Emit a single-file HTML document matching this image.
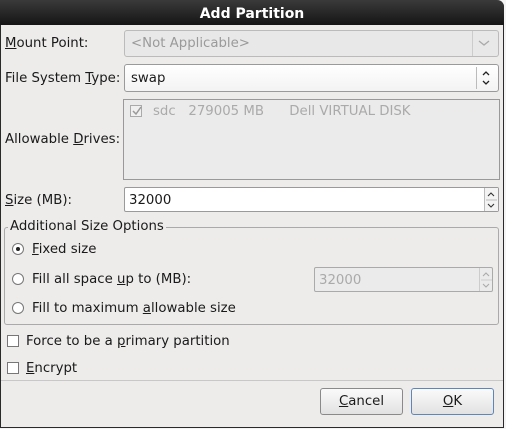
<!DOCTYPE html>
<html><head><style>
*{box-sizing:border-box;margin:0;padding:0}
body{width:506px;height:429px;background:#f4f4f4;font-family:"DejaVu Sans","Liberation Sans",sans-serif;font-size:13.3px;color:#1a1a1a;position:relative;overflow:hidden}
.dlg{position:absolute;left:0;top:0;width:504px;height:428px;background:#edeceb;border:1px solid #2a2a2a;border-top:none;border-radius:0 7px 0 0}
.title{position:absolute;left:0;top:0;width:504px;height:25px;background:linear-gradient(#3a3a3a,#151515);border-radius:0 7px 0 0;color:#fff;font-weight:bold;font-size:14px;text-align:center;line-height:28px}
.a{position:absolute;white-space:nowrap}
.t{margin-top:1px}
.box{position:absolute;border:1px solid #9a9a9a;border-radius:3px}
u{text-decoration:underline}
.rad{position:absolute;width:12px;height:12px;border:1px solid #777;border-radius:50%;background:#fff}
.chk{position:absolute;width:12px;height:12px;border:1px solid #777;background:#fff}
.btn{position:absolute;border:1px solid #8a8a8a;border-radius:3px;background:linear-gradient(#fafafa,#e2e2e2);text-align:center;line-height:26px}
</style></head><body>
<div class="dlg"></div>
<div class="title">Add Partition</div>

<div class="a" style="left:5px;top:36px"><u>M</u>ount Point:</div>
<div class="box" style="left:124px;top:30px;width:375px;height:27px;background:#e8e8e8;border-color:#bbb"></div>
<div class="a" style="left:131px;top:36px;color:#9a9a9a">&lt;Not Applicable&gt;</div>
<div class="a" style="left:472px;top:31px;width:1px;height:25px;background:#ccc"></div>
<svg class="a" style="left:477px;top:38px" width="14" height="10"><path d="M2 3l5 4 5-4" stroke="#aaa" fill="none" stroke-width="1.3"/></svg>

<div class="a" style="left:5px;top:71px">File System <u>T</u>ype:</div>
<div class="box" style="left:124px;top:64px;width:375px;height:28px;background:linear-gradient(#fff,#f3f3f3)"></div>
<div class="a" style="left:131px;top:71px">swap</div>
<div class="a" style="left:476px;top:67px;width:1px;height:22px;background:#bbb"></div>
<svg class="a" style="left:481px;top:70px" width="10" height="16"><path d="M2 5l3-3 3 3M2 11l3 3 3-3" stroke="#222" fill="none" stroke-width="1.3"/></svg>

<div class="a" style="left:5px;top:132px">Allowable <u>D</u>rives:</div>
<div class="a" style="left:123px;top:99px;width:377px;height:81px;border:1px solid #999;background:#ebebeb"></div>
<div class="chk" style="left:130px;top:105px;border-color:#aaa;background:#f0f0f0"></div>
<svg class="a" style="left:131px;top:105px" width="12" height="12"><path d="M2 6l3 3 5-7" stroke="#999" fill="none" stroke-width="1.5"/></svg>
<div class="a" style="left:153px;top:104px;color:#aaa">sdc&nbsp;&nbsp;&nbsp;279005 MB&nbsp;&nbsp;&nbsp;&nbsp;&nbsp;&nbsp;Dell VIRTUAL DISK</div>

<div class="a" style="left:5px;top:193px"><u>S</u>ize (MB):</div>
<div class="box" style="left:124px;top:187px;width:375px;height:25px;background:#fff;border-radius:2px"></div>
<div class="a" style="left:129px;top:193px">32000</div>
<div class="a" style="left:484px;top:188px;width:14px;height:23px;border-left:1px solid #bbb;background:#f3f3f3"></div>
<svg class="a" style="left:485px;top:189px" width="12" height="22"><path d="M3 7l3-3 3 3M3 15l3 3 3-3" stroke="#333" fill="none" stroke-width="1.1"/><path d="M1 11h11" stroke="#bbb"/></svg>

<div class="box" style="left:4px;top:227px;width:495px;height:98px;border-color:#aaa"></div>
<div class="a" style="left:8px;top:219px;background:#edeceb;padding:0 2px">Additional Size Options</div>
<div class="rad" style="left:12px;top:243px"></div><div class="a" style="left:16px;top:247px;width:4px;height:4px;border-radius:50%;background:#222"></div>
<div class="a" style="left:32px;top:242px"><u>F</u>ixed size</div>
<div class="rad" style="left:12px;top:273px"></div>
<div class="a" style="left:32px;top:272px">Fill all space <u>u</u>p to (MB):</div>
<div class="box" style="left:314px;top:267px;width:179px;height:25px;background:#ebebeb;border-color:#aaa;border-radius:2px"></div>
<div class="a" style="left:319px;top:273px;color:#aaa">32000</div>
<div class="a" style="left:479px;top:268px;width:13px;height:23px;border-left:1px solid #ccc"></div>
<svg class="a" style="left:480px;top:269px" width="12" height="22"><path d="M3 7l3-3 3 3M3 15l3 3 3-3" stroke="#aaa" fill="none" stroke-width="1.1"/><path d="M1 11h11" stroke="#ccc"/></svg>
<div class="rad" style="left:12px;top:302px"></div>
<div class="a" style="left:32px;top:301px">Fill to maximum <u>a</u>llowable size</div>

<div class="chk" style="left:7px;top:335px"></div>
<div class="a" style="left:26px;top:334px">Force to be a <u>p</u>rimary partition</div>
<div class="chk" style="left:7px;top:362px"></div>
<div class="a" style="left:26px;top:361px"><u>E</u>ncrypt</div>

<div class="a" style="left:1px;top:380px;width:502px;height:1px;background:#c8c8c8"></div>
<div class="btn" style="left:320px;top:388px;width:83px;height:27px"><u>C</u>ancel</div>
<div class="btn" style="left:411px;top:388px;width:83px;height:27px;border-color:#5f86b8"><u>O</u>K</div>
</body></html>
